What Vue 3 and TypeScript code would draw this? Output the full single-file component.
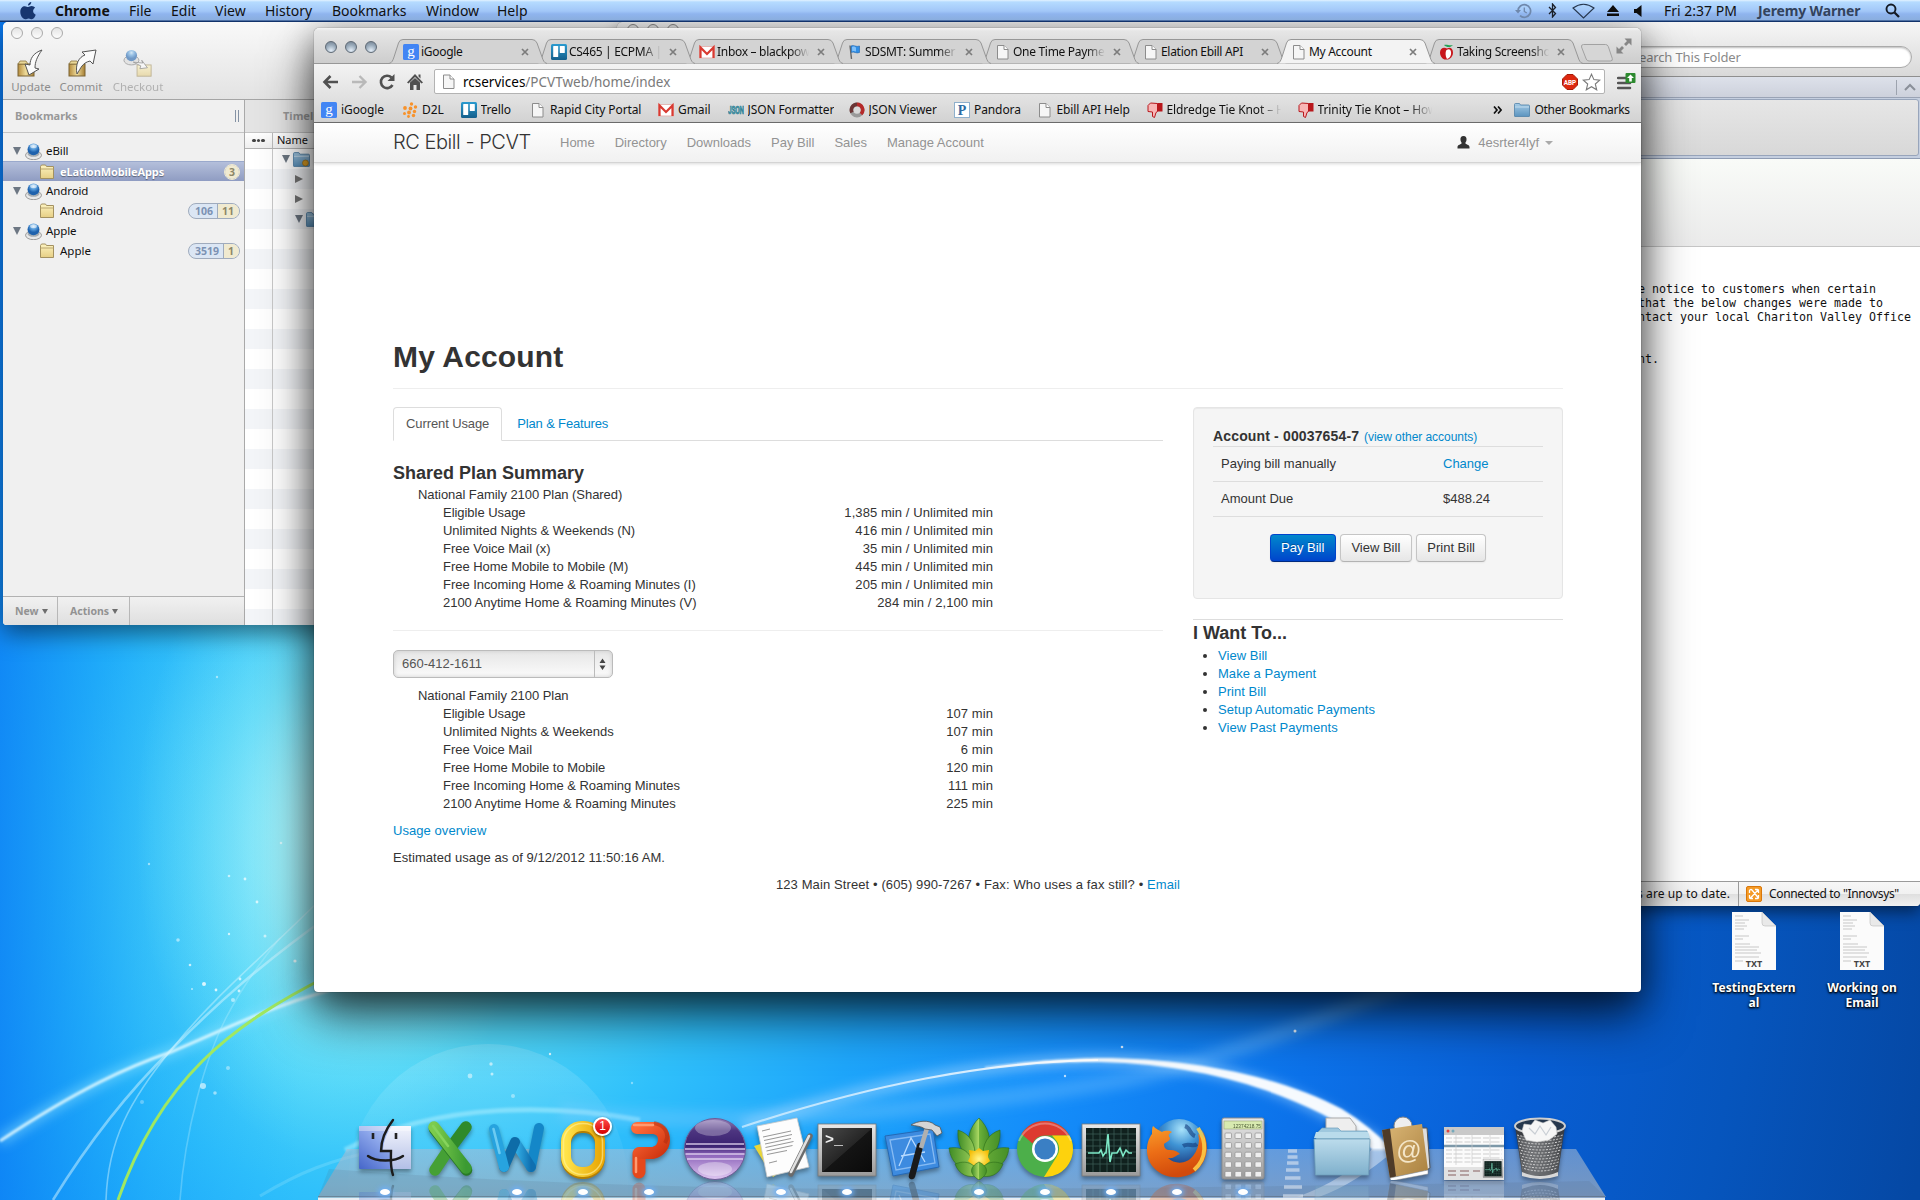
<script setup lang="ts">
interface Tab { title: string; icon: string; active?: boolean; fade?: boolean }
interface Mark { title: string; icon: string; width: number; fade?: boolean }
interface Usage { label: string; value: string }
interface DockItem { icon: string; running: boolean; badge?: string }

const menus = [
  { label: 'Chrome', w: 74, bold: true },
  { label: 'File', w: 42 },
  { label: 'Edit', w: 44 },
  { label: 'View', w: 50 },
  { label: 'History', w: 67 },
  { label: 'Bookmarks', w: 94 },
  { label: 'Window', w: 71 },
  { label: 'Help', w: 50 },
]

const tabs: Tab[] = [
  { title: 'iGoogle', icon: 'google' },
  { title: 'CS465 | ECPMA | T', icon: 'trello', fade: true },
  { title: 'Inbox – blackpowder', icon: 'gmail', fade: true },
  { title: 'SDSMT: Summer E', icon: 'flag', fade: true },
  { title: 'One Time Payment', icon: 'page', fade: true },
  { title: 'Elation Ebill API', icon: 'page' },
  { title: 'My Account', icon: 'page', active: true },
  { title: 'Taking Screenshots', icon: 'apple-red', fade: true },
]

const marks: Mark[] = [
  { title: 'iGoogle', icon: 'google', width: 81 },
  { title: 'D2L', icon: 'd2l', width: 58.5 },
  { title: 'Trello', icon: 'trello', width: 69.5 },
  { title: 'Rapid City Portal', icon: 'page', width: 128 },
  { title: 'Gmail', icon: 'gmail', width: 69.5 },
  { title: 'JSON Formatter', icon: 'json', width: 121 },
  { title: 'JSON Viewer', icon: 'ring', width: 105.5 },
  { title: 'Pandora', icon: 'pandora', width: 82.5 },
  { title: 'Ebill API Help', icon: 'page', width: 110 },
  { title: 'Eldredge Tie Knot – H', icon: 'thumb', width: 151, fade: true },
  { title: 'Trinity Tie Knot – How', icon: 'thumb', width: 140, fade: true },
]

const navLinks = ['Home', 'Directory', 'Downloads', 'Pay Bill', 'Sales', 'Manage Account']

const shared: Usage[] = [
  { label: 'Eligible Usage', value: '1,385 min / Unlimited min' },
  { label: 'Unlimited Nights & Weekends (N)', value: '416 min / Unlimited min' },
  { label: 'Free Voice Mail (x)', value: '35 min / Unlimited min' },
  { label: 'Free Home Mobile to Mobile (M)', value: '445 min / Unlimited min' },
  { label: 'Free Incoming Home & Roaming Minutes (I)', value: '205 min / Unlimited min' },
  { label: '2100 Anytime Home & Roaming Minutes (V)', value: '284 min / 2,100 min' },
]
const line: Usage[] = [
  { label: 'Eligible Usage', value: '107 min' },
  { label: 'Unlimited Nights & Weekends', value: '107 min' },
  { label: 'Free Voice Mail', value: '6 min' },
  { label: 'Free Home Mobile to Mobile', value: '120 min' },
  { label: 'Free Incoming Home & Roaming Minutes', value: '111 min' },
  { label: '2100 Anytime Home & Roaming Minutes', value: '225 min' },
]
const wants = ['View Bill', 'Make a Payment', 'Print Bill', 'Setup Automatic Payments', 'View Past Payments']

const repos = [
  { name: 'eBill', child: 'eLationMobileApps', selected: true, counts: ['3'] },
  { name: 'Android', child: 'Android', selected: false, counts: ['106', '11'] },
  { name: 'Apple', child: 'Apple', selected: false, counts: ['3519', '1'] },
]
const treeRows = Array.from({ length: 24 }, (_, i) => i)

const dockLeft: DockItem[] = [
  { icon: 'finder', running: true },
  { icon: 'excel', running: false },
  { icon: 'word', running: true },
  { icon: 'outlook', running: true, badge: '1' },
  { icon: 'powerpoint', running: true },
  { icon: 'eclipse', running: false },
  { icon: 'textedit', running: true },
  { icon: 'terminal', running: true },
  { icon: 'xcode', running: false },
  { icon: 'leaf', running: true },
  { icon: 'chrome', running: true },
  { icon: 'activity', running: true },
  { icon: 'firefox', running: true },
  { icon: 'calculator', running: true },
]
const dockRight: DockItem[] = [
  { icon: 'documents', running: false },
  { icon: 'contacts', running: false },
  { icon: 'minimized', running: false },
  { icon: 'trash', running: false },
]

const dots = [
  [217, 677, 1.2, 0.5], [281, 843, 1.3, 0.6], [229, 876, 1.3, 0.6], [245, 879, 1.4, 0.7], [257, 902, 1.4, 0.7],
  [178, 940, 1.8, 0.5], [229, 934, 1.2, 0.7], [265, 936, 1.5, 0.6], [190, 965, 1.3, 0.7], [240, 979, 1.4, 0.7],
  [204, 984, 2, 0.8], [216, 990, 1.4, 0.8], [192, 989, 1, 0.6], [239, 991, 1.4, 0.7], [295, 961, 1.6, 0.8],
  [233, 1000, 2, 0.5], [228, 1068, 2, 0.4], [203, 1086, 3, 0.6], [215, 1093, 1.8, 0.5], [142, 1102, 2, 0.3],
  [470, 1076, 2.4, 0.5], [491, 1064, 1.7, 0.6], [550, 1054, 1.2, 0.8], [513, 1096, 2, 0.4], [492, 1074, 1.5, 0.6],
  [632, 1083, 1.2, 0.4], [1122, 1047, 1.3, 0.8], [1295, 1031, 1.5, 0.9], [1065, 1076, 1.2, 0.7], [149, 864, 1.2, 0.5],
]
const calcKeys = Array.from({ length: 20 }, (_, i) => ({ x: 14 + (i % 4) * 10, y: 17 + Math.floor(i / 4) * 9.6 }))
const meshRows = [0, 1, 2, 3, 4, 5, 6, 7, 8, 9, 10, 11]
</script>

<template>
  <div class="desktop">
    <svg class="wallpaper" width="1920" height="1200" viewBox="0 0 1920 1200">
      <defs>
        <radialGradient id="sky" gradientUnits="userSpaceOnUse" cx="390" cy="860" r="1560">
          <stop offset="0" stop-color="#8cecfa" /><stop offset=".07" stop-color="#74e4f9" />
          <stop offset=".13" stop-color="#50d6f8" /><stop offset=".22" stop-color="#2fc0fb" />
          <stop offset=".32" stop-color="#1ea6fb" /><stop offset=".45" stop-color="#148dfa" />
          <stop offset=".6" stop-color="#0c72ea" /><stop offset=".74" stop-color="#085ed4" />
          <stop offset=".87" stop-color="#0655bd" /><stop offset="1" stop-color="#0548a4" />
        </radialGradient>
        <linearGradient id="skyLeft" x1="0" x2="1" y1="0" y2="0">
          <stop offset="0" stop-color="#0a7cf4" stop-opacity=".75" /><stop offset=".5" stop-color="#0c98f8" stop-opacity=".28" />
          <stop offset="1" stop-color="#18a8ff" stop-opacity="0" />
        </linearGradient>
        <radialGradient id="flare"><stop offset="0" stop-color="#d8fbf6" stop-opacity=".7" /><stop offset=".5" stop-color="#b8f8f8" stop-opacity=".3" /><stop offset="1" stop-color="#9ff" stop-opacity="0" /></radialGradient>
        <linearGradient id="bubble" x1="0" y1="0" x2="0" y2="1"><stop offset="0" stop-color="#fff" stop-opacity=".14" /><stop offset=".6" stop-color="#fff" stop-opacity="0" /></linearGradient>
        <linearGradient id="arc" x1="742" x2="1184" gradientUnits="userSpaceOnUse"><stop offset="0" stop-color="#fff" stop-opacity=".55" /><stop offset="1" stop-color="#fff" /></linearGradient>
        <filter id="soft1"><feGaussianBlur stdDeviation="1.2" /></filter>
        <filter id="soft5" x="-20%" y="-50%" width="140%" height="200%"><feGaussianBlur stdDeviation="6" /></filter>
      </defs>
      <rect width="1920" height="1200" fill="url(#sky)" />
      <rect width="300" height="1200" fill="url(#skyLeft)" />
      <ellipse cx="335" cy="830" rx="200" ry="330" fill="url(#flare)" />
      <circle cx="488" cy="1184" r="140" fill="url(#bubble)" />
      <g fill="none">
        <path d="M345 1150C440 1100 560 1105 640 1120" stroke="#bff3ff" stroke-opacity=".45" stroke-width="5" filter="url(#soft1)" />
        <path d="M560 1112C740 1130 940 1110 1124 1080C1240 1055 1340 1010 1440 970" stroke="#8fd0ff" stroke-opacity=".3" stroke-width="16" filter="url(#soft5)" />
        <path d="M0 1141C80 1088 130 1066 171 1052C220 1032 260 1010 330 990" stroke="#8fe4ff" stroke-opacity=".6" stroke-width="9" filter="url(#soft5)" />
        <path d="M0 1141C80 1088 130 1066 171 1052C220 1032 260 1010 330 990" stroke="#e4faff" stroke-opacity=".85" stroke-width="3" filter="url(#soft1)" />
        <path d="M53 1200C90 1140 130 1090 171 1050C215 1005 260 965 330 915" stroke="#d4f6ff" stroke-opacity=".5" stroke-width="2.600" />
        <path d="M106 1200C108 1140 130 1100 171 1050C215 995 260 960 330 890" stroke="#d4f6ff" stroke-opacity=".45" stroke-width="1.600" />
        <path d="M180 1200C185 1130 205 1060 225 1020C240 990 262 960 280 938" stroke="#c4f3ff" stroke-opacity=".3" stroke-width="1.600" />
        <path d="M118 1200C160 1080 230 1025 330 975" stroke="#a0e860" stroke-width="3" />
        <path d="M260 1196C300 1172 330 1160 380 1150" stroke="#c4f3ff" stroke-opacity=".2" stroke-width="3" />
        <path d="M742 1127C870 1085 985 1062 1098 1060C1215 1060 1290 1085 1384 1146" stroke="#9fd6ff" stroke-opacity=".6" stroke-width="12" filter="url(#soft5)" />
        <path d="M742 1127C870 1085 985 1062 1098 1060" stroke="url(#arc)" stroke-width="2.200" />
      </g>
      <path d="M985 1067C1040 1060 1070 1058.500 1100 1058C1190 1058 1280 1076 1342 1109Q1370 1126 1393 1150H1372Q1346 1126 1322 1114C1265 1085 1190 1064 1100 1062C1060 1062 1040 1063 985 1068Z" fill="#fff" fill-opacity=".95" filter="url(#soft1)" />
      <circle v-for="(d, i) in dots" :key="i" :cx="d[0]" :cy="d[1]" :r="d[2]" fill="#fff" :fill-opacity="d[3]" />
    </svg>

    <!-- Shared gradients -->
    <svg class="sprite" width="0" height="0">
      <defs>
        <linearGradient id="gTrello" x2="0" y2="1"><stop offset="0" stop-color="#2a9bd0" /><stop offset="1" stop-color="#155f8b" /></linearGradient>
        <linearGradient id="gFolder" x2="0" y2="1"><stop offset="0" stop-color="#a5cbe6" /><stop offset="1" stop-color="#5b94bf" /></linearGradient>
        <linearGradient id="gYellow" x2="0" y2="1"><stop offset="0" stop-color="#fdf3c0" /><stop offset="1" stop-color="#e6cf85" /></linearGradient>
        <linearGradient id="gGold" x2="1" y2="0"><stop offset="0" stop-color="#b48b3d" /><stop offset=".5" stop-color="#efdc9b" /><stop offset="1" stop-color="#a57d32" /></linearGradient>
        <radialGradient id="gOrb" cx=".5" cy=".25"><stop offset="0" stop-color="#c3e2f8" /><stop offset=".5" stop-color="#5b9fdc" /><stop offset="1" stop-color="#1f62ad" /></radialGradient>
        <linearGradient id="gFinder" x1="0" y1="1" x2="1" y2="0"><stop offset="0" stop-color="#4566c9" /><stop offset=".5" stop-color="#8ba5ea" /><stop offset="1" stop-color="#dfe7fb" /></linearGradient>
        <linearGradient id="gFinder2" x2="0" y2="1"><stop offset="0" stop-color="#f3f5fd" /><stop offset="1" stop-color="#b3bfe6" /></linearGradient>
        <linearGradient id="gGreen" x2="1" y2="0"><stop offset="0" stop-color="#7dcc4c" /><stop offset="1" stop-color="#3b9a32" /></linearGradient>
        <linearGradient id="gBlue" x2="1" y2="0"><stop offset="0" stop-color="#36b4ea" /><stop offset="1" stop-color="#0f6fb0" /></linearGradient>
        <linearGradient id="gAmber" x2="1" y2="0"><stop offset="0" stop-color="#ffe34a" /><stop offset="1" stop-color="#eaa908" /></linearGradient>
        <linearGradient id="gRed" x2="1" y2="1"><stop offset="0" stop-color="#ff6a38" /><stop offset="1" stop-color="#cf3510" /></linearGradient>
        <linearGradient id="gEclipse" x2="0" y2="1"><stop offset="0" stop-color="#9a86bd" /><stop offset=".2" stop-color="#4d3580" /><stop offset=".45" stop-color="#3a2270" /><stop offset=".6" stop-color="#8e66bb" /><stop offset="1" stop-color="#e0c8f2" /></linearGradient>
        <linearGradient id="gMetal" x2="0" y2="1"><stop offset="0" stop-color="#e8e8e8" /><stop offset="1" stop-color="#9a9a9a" /></linearGradient>
        <linearGradient id="gDark" x2="1" y2="1"><stop offset="0" stop-color="#4a4a4a" /><stop offset=".5" stop-color="#262626" /><stop offset=".51" stop-color="#141414" /><stop offset="1" stop-color="#0a0a0a" /></linearGradient>
        <linearGradient id="gLeaf" x2="1" y2="0"><stop offset="0" stop-color="#3f8c26" /><stop offset=".48" stop-color="#a9d862" /><stop offset=".52" stop-color="#6cb03a" /><stop offset="1" stop-color="#458f28" /></linearGradient>
        <radialGradient id="gSun"><stop offset="0" stop-color="#fff68a" /><stop offset="1" stop-color="#f5bd05" /></radialGradient>
        <radialGradient id="gGlobe" cx=".55" cy=".2" r=".8"><stop offset="0" stop-color="#a9e3fb" /><stop offset=".4" stop-color="#3f93d4" /><stop offset="1" stop-color="#132a70" /></radialGradient>
        <linearGradient id="gFox" x2=".3" y2="1"><stop offset="0" stop-color="#f9a02c" /><stop offset=".5" stop-color="#ec6e16" /><stop offset="1" stop-color="#d14a0b" /></linearGradient>
        <linearGradient id="gDocs" x2="0" y2="1"><stop offset="0" stop-color="#bcdcec" /><stop offset="1" stop-color="#7fb0cc" /></linearGradient>
        <linearGradient id="gBook" x2="1" y2="1"><stop offset="0" stop-color="#dcb878" /><stop offset="1" stop-color="#a9803e" /></linearGradient>
        <linearGradient id="gMesh" x2="1" y2="0"><stop offset="0" stop-color="#777" /><stop offset=".3" stop-color="#d8d8d8" /><stop offset=".7" stop-color="#aaa" /><stop offset="1" stop-color="#555" /></linearGradient>
      </defs>
    </svg>

    <!-- Icon symbols -->
    <svg class="symbols">
      <symbol id="i-google" viewBox="0 0 16 16"><rect width="16" height="16" rx="1.5" fill="#4285f4" /><text x="8" y="11.8" text-anchor="middle" font-family="Liberation Serif, serif" font-size="15" fill="#fff">g</text></symbol>
      <symbol id="i-trello" viewBox="0 0 16 16"><rect width="16" height="16" rx="1.5" fill="url(#gTrello)" /><rect x="2.2" y="2" width="5" height="11" rx=".6" fill="#fff" /><rect x="8.8" y="2" width="5" height="7" rx=".6" fill="#fff" /></symbol>
      <symbol id="i-gmail" viewBox="0 0 16 16"><rect x=".5" y="2.5" width="15" height="11.5" fill="#fff" stroke="#e4b7b4" /><path d="M1.5 14V3.5L8 10l6.500-6.500V14" fill="none" stroke="#d93a31" stroke-width="2.200" /></symbol>
      <symbol id="i-flag" viewBox="0 0 16 16"><path d="M3 1.500l1.500 13.500" stroke="#666" stroke-width="1.400" /><path d="M4 2c3-1.500 5 1.500 8.500 0v6.500c-3.500 1.500-5.500-1.500-8 0z" fill="#2f8ee6" stroke="#1a62ae" stroke-width=".6" /><path d="M5 3c2-1 3 0 4 .5v4c-1.500-.5-2.500-.8-3.800 0z" fill="#7fc0fa" /></symbol>
      <symbol id="i-page" viewBox="0 0 16 16"><path d="M2.500 1.500h6.500l4 4v9.500h-10.500z" fill="#f6f6f6" stroke="#8c8c8c" /><path d="M9 1.500v4h4" fill="#fff" stroke="#8c8c8c" /></symbol>
      <symbol id="i-apple-red" viewBox="0 0 16 16"><path d="M8 4.500C5 2.500 1 4 1 8.500S4.500 16 7 15.500c4 .5 7-3 7-7S11 2.500 8 4.500z" fill="#c8161b" /><path d="M7.500 6c-1.500 2-1 7 .5 9 3-1 4.500-4 4-7S10 4.500 7.500 6z" fill="#fff" /><path d="M5 1c3-1 5 1 9 0-2 2.500-6 3-9 0z" fill="#22a455" /></symbol>
      <symbol id="i-d2l" viewBox="0 0 16 16"><g fill="#f7922b"><circle cx="9.500" cy="2" r="1.700" /><circle cx="13.500" cy="5" r="1.700" /><circle cx="8.500" cy="6.500" r="1.900" /><circle cx="3" cy="6" r="1.900" /><circle cx="12.500" cy="9.500" r="1.700" /><circle cx="7" cy="10.500" r="1.900" /><circle cx="2.500" cy="11.500" r="1.500" /><circle cx="11.500" cy="13.500" r="1.700" /><circle cx="6.500" cy="14.500" r="1.400" /></g></symbol>
      <symbol id="i-json" viewBox="0 0 16 16"><text x="8" y="12" text-anchor="middle" font-family="Roboto, sans-serif" font-weight="700" font-size="11.500" textLength="16" lengthAdjust="spacingAndGlyphs" fill="#4aa3b5" stroke="#1c6f86" stroke-width=".6">JSON</text></symbol>
      <symbol id="i-ring" viewBox="0 0 16 16"><circle cx="8" cy="8" r="5.600" fill="none" stroke="#9a9a9a" stroke-width="3.600" /><path d="M8 2.400A5.600 5.600 0 0 1 12 12" fill="none" stroke="#b52a2a" stroke-width="3.600" /><path d="M3 10.500A5.600 5.600 0 0 1 8 2.400" fill="none" stroke="#6b3636" stroke-width="3.600" /></symbol>
      <symbol id="i-pandora" viewBox="0 0 16 16"><rect x=".5" y=".5" width="15" height="15" fill="#fff" stroke="#8fb0cc" /><text x="8" y="13" text-anchor="middle" font-family="Liberation Serif, serif" font-weight="700" font-size="14" fill="#2c6aa2">P</text></symbol>
      <symbol id="i-thumb" viewBox="0 0 16 16"><path d="M10.500 1.500L3.500 1 1 3.500v6l4.500.5v4.500l2 1 1.500-5 1.500-1z" fill="#f8b6b6" stroke="#b8171c" /><rect x="10.500" y="1" width="5" height="8.500" fill="#b8171c" /></symbol>
      <symbol id="i-folder" viewBox="0 0 16 16"><path d="M.5 2.500q0-1 1-1h4l1 1.500h8q1 0 1 1v10q0 .5-.5.500H1q-.5 0-.5-.5z" fill="url(#gFolder)" stroke="#4f81a8" stroke-width=".8" /><path d="M1 5h14" stroke="#cfe4f3" stroke-width=".8" /></symbol>
      <symbol id="i-yfolder" viewBox="0 0 16 16"><path d="M1.500 2.500l1-1.500h4l1 1.500h7v12h-13z" fill="url(#gYellow)" stroke="#a39160" /><path d="M1.500 5h13" stroke="#b9a671" /></symbol>
      <symbol id="i-orb" viewBox="0 0 16 16"><ellipse cx="8" cy="11.500" rx="7.500" ry="4.200" fill="#e8e8e8" stroke="#8d8d8d" stroke-width=".8" /><ellipse cx="8" cy="10" rx="5.600" ry="3" fill="#a5acb2" /><circle cx="8" cy="6" r="5.600" fill="url(#gOrb)" /><ellipse cx="8" cy="3" rx="3.200" ry="1.800" fill="#fff" fill-opacity=".55" /></symbol>

      <symbol id="d-finder" viewBox="0 0 64 64"><rect x="6" y="10" width="52" height="43" rx="1" fill="url(#gFinder)" /><path d="M39 10h18q1 0 1 1v42H40c-2-6-2-12-2-18h-8c0-9 4-18 9-25z" fill="url(#gFinder2)" /><rect x="6" y="10" width="52" height="5" fill="#fff" fill-opacity=".35" /><path d="M20 17v6M43 17v6" stroke="#222" stroke-width="2.600" /><path d="M40 4c-7 9-12 20-12 31h10c0 8-1 16 2 24" fill="none" stroke="#1c1c1c" stroke-width="2.400" stroke-linecap="round" /><path d="M15 40c8 6 27 6 35 0" fill="none" stroke="#1c1c1c" stroke-width="2.400" stroke-linecap="round" /></symbol>
      <symbol id="d-excel" viewBox="0 0 64 64"><g stroke-linecap="round" stroke-width="11.500"><path d="M47 11L30 34" stroke="#2f8a2a" /><path d="M30 33L16 54" stroke="#45a035" /><path d="M15 12L47 53" stroke="#287a26" transform="translate(.5 1)" /><path d="M15 11L47 52" stroke="url(#gGreen)" /><path d="M14 10L29 30" stroke="#86d45c" stroke-width="2.500" /></g></symbol>
      <symbol id="d-word" viewBox="0 0 64 64"><g fill="none" stroke-linecap="round" stroke-linejoin="round" stroke-width="10"><path d="M46 51L54 12" stroke="#1487c8" /><path d="M30 26L46 51" stroke="url(#gBlue)" /><path d="M19 51L30 26" stroke="#0e6ca8" /><path d="M9 13L19 51" stroke="#27a3df" /><path d="M8.500 13l6 24" stroke="#6ccbf2" stroke-width="2.600" /></g></symbol>
      <symbol id="d-outlook" viewBox="0 0 64 64"><rect x="15" y="11" width="34" height="46" rx="16" fill="none" stroke="#b37f05" stroke-width="10" transform="translate(0 1)" /><rect x="15" y="10" width="34" height="46" rx="16" fill="none" stroke="url(#gAmber)" stroke-width="10" /><rect x="12.500" y="7.500" width="39" height="51" rx="19" fill="none" stroke="#fff3a0" stroke-opacity=".6" stroke-width="1.500" /></symbol>
      <symbol id="d-powerpoint" viewBox="0 0 64 64"><path d="M22 38v18" fill="none" stroke="#e5481c" stroke-width="13" stroke-linecap="round" /><path d="M20 12h17c14 2 13 22-1 25H22" fill="none" stroke="url(#gRed)" stroke-width="12" stroke-linecap="round" stroke-linejoin="round" /><path d="M37 7c12 2 16 12 11 20" fill="none" stroke="#a3260b" stroke-opacity=".4" stroke-width="4" /><path d="M17 9h19M19 42v14" stroke="#ff9a70" stroke-width="2.500" stroke-linecap="round" /></symbol>
      <symbol id="d-eclipse" viewBox="0 0 64 64"><circle cx="32" cy="33" r="30.500" fill="url(#gEclipse)" stroke="#6e5a96" /><path d="M3 28h58M2 33h60M2.500 38h59M4 43h56" stroke="#e8dcf5" stroke-opacity=".85" stroke-width="1.500" /><ellipse cx="30" cy="12" rx="18" ry="8" fill="#fff" fill-opacity=".28" /><ellipse cx="32" cy="53" rx="17" ry="7" fill="#fff" fill-opacity=".35" /></symbol>
      <symbol id="d-textedit" viewBox="0 0 64 64"><path d="M5 30l10-3 15 30-6 4z" fill="#e8d539" /><path d="M8 10l40-8 12 49-42 10z" fill="#fdfdfd" stroke="#c8c8c8" stroke-width=".8" /><g stroke="#8b8b8b" stroke-width=".9"><path d="M13 15l8-2M14 21l28-6M15 24.500l28-6M16 28l26-5.500M16.500 31.500l28-6M17.500 35l26-5.500M18 38.500l20-4M20 47l8-2" /></g><path d="M61 20L42 58" stroke="#6b6b6b" stroke-width="5.500" stroke-linecap="round" /><path d="M60 20L42 56" stroke="#e2e2e2" stroke-width="2.600" stroke-linecap="round" /></symbol>
      <symbol id="d-terminal" viewBox="0 0 64 64"><rect x="3" y="8" width="58" height="52" fill="url(#gMetal)" stroke="#777" stroke-width=".8" /><rect x="7" y="12" width="50" height="44" fill="url(#gDark)" /><text x="10" y="28" font-family="Liberation Mono, monospace" font-weight="700" font-size="15" fill="#f1f1f1">&gt;_</text></symbol>
      <symbol id="d-xcode" viewBox="0 0 64 64"><path d="M4 20l48-7 6 38-46 9z" fill="#3d8be0" stroke="#2568b4" /><g fill="none" stroke="#b7daff" stroke-width="1.300"><path d="M9 24l40-6 5 29-39 7z" stroke-opacity=".6" /><path d="M18 50l12-28 14 24M20 40l24-4" /></g><path d="M39 30L31 60" stroke="#1a1a1a" stroke-width="6.500" stroke-linecap="round" /><path d="M46 12l-6 20" stroke="#b0b0b0" stroke-width="4.500" /><path d="M30 9c6-4 18-6 24 0l5 2 2 6-5 3-5-6-7-1c-4-3-9-3-14-4z" fill="#d5d5d5" stroke="#555" stroke-width=".8" /></symbol>
      <symbol id="d-leaf" viewBox="0 0 64 64"><g fill="url(#gLeaf)" stroke="#2c6b18" stroke-width=".6"><path d="M32 2c9 9 13 20 9 34H23C19 22 23 11 32 2z" /><path d="M11 14c12 4 18 14 17 28-12 0-18-14-17-28zM53 14c-12 4-18 14-17 28 12 0 18-14 17-28z" /><path d="M2 32c14-2 22 4 26 20C16 56 4 48 2 32zM62 32c-14-2-22 4-26 20 12 4 24-4 26-20z" /></g><path d="M32 32l4 3 6-1-1 7 2 4-11 9-11-9 2-4-1-7 6 1z" fill="url(#gSun)" /><g fill="url(#gLeaf)" stroke="#2c6b18" stroke-width=".6"><path d="M8 48c10-4 20-2 24 11-10 4-20 0-24-11zM56 48c-10-4-20-2-24 11 10 4 20 0 24-11z" /><path d="M32 46c10 5 10 12 0 18-10-6-10-13 0-18z" /></g></symbol>
      <symbol id="d-chrome" viewBox="0 0 64 64"><circle cx="32" cy="33" r="28" fill="#4caf4a" /><path d="M32 5a28 28 0 0 1 24.500 14.500H32a14 14 0 0 0-12.500 8L8.500 18A28 28 0 0 1 32 5z" fill="#dd3b30" /><path d="M56.500 19.500A28 28 0 0 1 31 61l12.500-20A14 14 0 0 0 42 23l-3-3.500z" fill="#fdd20d" /><circle cx="32" cy="33" r="13" fill="#fff" /><circle cx="32" cy="33" r="10.500" fill="#3a7fc4" /><path d="M6 25a28 28 0 0 1 52 0" fill="none" stroke="#fff" stroke-opacity=".3" stroke-width="2" /></symbol>
      <symbol id="d-activity" viewBox="0 0 64 64"><rect x="3" y="8" width="58" height="52" fill="url(#gMetal)" stroke="#777" stroke-width=".8" /><rect x="7" y="12" width="50" height="44" fill="#10211e" /><path d="M7 18h50M7 24h50M7 30h50M7 36h50M7 42h50M7 48h50M14 12v44M21 12v44M28 12v44M35 12v44M42 12v44M49 12v44" stroke="#3b5c54" stroke-width=".8" /><path d="M9 37h11l2-3 2 6 2-3h1l2-19 2 28 2-9h5l3-5 3 8 3-6 3 3h3" fill="none" stroke="#7ce8c6" stroke-width="1.600" /></symbol>
      <symbol id="d-firefox" viewBox="0 0 64 64"><circle cx="34" cy="29" r="26" fill="url(#gGlobe)" /><path d="M40 10c6 2 4 8 10 10M38 30c6-4 10 2 14-2" stroke="#123b7c" stroke-width="4" fill="none" stroke-opacity=".6" /><path d="M57 14c8 14 6 30-5 40C40 64 20 64 9 52-2 40 2 24 7 18c0-4 0-6 1-8 3 3 6 4 9 6 4-2 8-1 10 0-4 2-4 4-2 6 0 3-4 4-6 6 0 4 2 6 6 6 5 0 8 2 10 4-4 1-6 5-12 4 6 6 18 7 25-2 6-8 7-16 5-22 3 2 5 4 6 6 0-4-1-7-2-10z" fill="url(#gFox)" /><path d="M53 12c8 12 10 30-4 42" fill="none" stroke="#ffd24a" stroke-width="4" stroke-opacity=".85" /></symbol>
      <symbol id="d-calculator" viewBox="0 0 64 64"><rect x="11" y="2" width="42" height="61" rx="2" fill="url(#gMetal)" stroke="#8d8d8d" /><rect x="13" y="5" width="38" height="8" fill="#d8eab0" stroke="#9aa67b" stroke-width=".6" /><text x="50" y="11.500" text-anchor="end" font-family="Liberation Sans, sans-serif" font-size="6" textLength="28" lengthAdjust="spacingAndGlyphs" fill="#4b5a36">12374218.75</text><g fill="#efefef" stroke="#909090" stroke-width=".7"><rect v-for="(k, i) in calcKeys" :key="i" :x="k.x" :y="k.y" width="6.500" height="5.500" rx="1" /></g></symbol>
      <symbol id="d-documents" viewBox="0 0 64 64"><path d="M16 2h24l6 8v10H16z" fill="#eee" stroke="#aaa" /><path d="M8 16l4-4h16l3 3h26l2 8H6z" fill="#9fc8de" stroke="#6d9ebb" stroke-width=".7" /><path d="M4 22l2-6h52l2 6z" fill="#b9dbeb" /><path d="M4 23h56l-1.500 36h-53z" fill="url(#gDocs)" stroke="#6f9fbb" stroke-width=".8" /></symbol>
      <symbol id="d-contacts" viewBox="0 0 64 64"><circle cx="27" cy="10" r="9" fill="#eee" stroke="#888" /><path d="M44 12h7l3 40-7 4z" fill="#ddd" stroke="#555" /><path d="M6 14l40-6 6 46-38 8z" fill="url(#gBook)" /><path d="M6 14l8-1.500 6 48-6 1.500z" fill="#4e3b28" /><path d="M14 62l38-8 0 4-37 7z" fill="#fff" stroke="#888" stroke-width=".5" /><text x="33" y="43" text-anchor="middle" font-family="Liberation Sans, sans-serif" font-size="25" fill="#f4e6c8">@</text></symbol>
      <symbol id="d-minimized" viewBox="0 0 64 64"><rect x="2" y="11" width="60" height="56" fill="#fbfbfb" /><rect x="2" y="11" width="60" height="8" fill="#c9c9c9" /><circle cx="6" cy="15" r="1.500" fill="#d44" /><circle cx="11" cy="15" r="1.500" fill="#7ab" /><path d="M4 22h56M4 26h56M4 34h56M4 38h56M4 42h56M4 46h56" stroke="#bbb" stroke-width=".7" stroke-dasharray="6 1.500 9 2" /><path d="M2 30h60" stroke="#7d98a8" stroke-width="2.500" /><path d="M14 19v30M30 19v30M48 19v30" stroke="#ccc" stroke-width=".7" /><rect x="2" y="51" width="60" height="13" fill="#e2e2e2" /><path d="M6 55h8M6 59h8M18 55h9M18 59h9M31 55h7" stroke="#a58a8a" stroke-width="1.300" /></symbol>
      <symbol id="d-trash" viewBox="0 0 64 64"><path d="M7 10l7 47c1 5 35 5 36 0l7-47z" fill="#3a3d42" /><path d="M9 20l5 36c1 5 35 5 36 0l5-36z" fill="url(#gMesh)" fill-opacity=".35" /><g fill="none" stroke="#d5d5d5" stroke-width="1" stroke-dasharray="2 1.400"><path v-for="r in meshRows" :key="r" :d="`M${9 + r * 0.5} ${19 + r * 3}Q32 ${25 + r * 3} ${55 - r * 0.5} ${19 + r * 3}`" :stroke-dashoffset="(r % 2) * 1.7" /></g><ellipse cx="32" cy="10" rx="25" ry="7.500" fill="#26384e" stroke="#cfcfcf" stroke-width="2" /><path d="M14 15l2-7 7 1 4-5 8 3 7-3 6 7 1 7-8 6-12 2-11-2z" fill="#f6f6f6" stroke="#ccc" stroke-width=".6" /><path d="M21 12l6 6 5-8 6 9 5-8" fill="none" stroke="#c9ced4" stroke-width="1.200" /><path d="M14 56q18 8 36 0v4q-18 6-36 0z" fill="#d8d8d8" /></symbol>
    </svg>

    <!-- Version-control client -->
    <section class="window svn">
      <header class="svn-bar">
        <div class="idle-lights"><i /><i /><i /></div>
        <div class="svn-tools">
          <div class="tool">
            <svg width="34" height="30" viewBox="0 0 34 30"><rect x="4" y="15" width="16" height="12" fill="url(#gGold)" stroke="#7a6333" /><path d="M4 15l2-3h6l2 3z" fill="#e9d798" stroke="#8a7340" stroke-width=".8" /><path d="M28 1C19 4 16 10 16 16l-5-1 4 11 10-6-4-1c0-6 2-11 7-18z" fill="#fbfbfb" stroke="#555" /></svg>
            <span>Update</span>
          </div>
          <div class="tool">
            <svg width="34" height="30" viewBox="0 0 34 30"><rect x="5" y="15" width="16" height="12" fill="url(#gGold)" stroke="#7a6333" /><path d="M5 15l2-3h6l2 3z" fill="#e9d798" stroke="#8a7340" stroke-width=".8" /><path d="M13 25C11 15 15 8 21 6l-3-3 14-2-3 14-3-3c-8 2-9 7-13 13z" fill="#fbfbfb" stroke="#555" /></svg>
            <span>Commit</span>
          </div>
          <div class="tool faded">
            <svg width="34" height="32" viewBox="0 0 34 32"><ellipse cx="10" cy="12" rx="8" ry="5" fill="#ddd" stroke="#777" /><circle cx="10" cy="7" r="6" fill="url(#gOrb)" /><rect x="16" y="17" width="15" height="12" fill="url(#gYellow)" stroke="#a39160" /><path d="M12 14l10 1-1-3 6 8-8 1 1-3z" fill="#fff" stroke="#555" stroke-width=".8" /></svg>
            <span>Checkout</span>
          </div>
        </div>
      </header>
      <div class="svn-body">
        <aside class="side">
          <div class="side-head"><span>Bookmarks</span><i class="grip" /></div>
          <ul class="repos">
            <template v-for="r in repos" :key="r.name">
              <li class="repo"><i class="tri down" /><svg width="17" height="17"><use href="#i-orb" /></svg><span>{{ r.name }}</span></li>
              <li class="repo child" :class="{ selected: r.selected }">
                <svg width="16" height="16"><use href="#i-yfolder" /></svg><span>{{ r.child }}</span>
                <b class="pill"><em v-for="c in r.counts" :key="c">{{ c }}</em></b>
              </li>
            </template>
          </ul>
          <div class="side-foot"><span class="new">New<i /></span><span class="actions">Actions<i /></span></div>
        </aside>
        <div class="tree">
          <div class="tree-top">Timeline</div>
          <div class="tree-head"><span class="dots"><i /><i /><i /></span><span>Name</span></div>
          <div class="tree-rows">
            <div v-for="n in treeRows" :key="n" class="tree-row">
              <span class="cell">
                <template v-if="n === 0"><i class="tri down" /><svg width="17" height="17"><use href="#i-folder" /><circle cx="12.500" cy="12" r="3" fill="#e0a024" stroke="#946710" stroke-width=".6" /></svg></template>
                <template v-else-if="n < 4"><i class="tri in" :class="n === 3 ? 'down' : 'right'" /><svg width="17" height="17"><use href="#i-folder" /></svg></template>
              </span>
            </div>
          </div>
        </div>
      </div>
    </section>

    <!-- Mail client -->
    <section class="window mail">
      <div class="mail-bar"><div class="idle-lights dark"><i /><i /><i /></div><div class="mail-search">Search This Folder</div></div>
      <div class="mail-cols"><i /><svg width="14" height="8" viewBox="0 0 14 8"><path d="M2 7l5-5 5 5" fill="none" stroke="#8a8f99" stroke-width="2" /></svg></div>
      <div class="mail-sel"><div /></div>
      <div class="mail-head" />
      <pre class="mail-text">e notice to customers when certain
that the below changes were made to
ntact your local Chariton Valley Office


nt.</pre>
      <div class="mail-status">
        <span class="uptodate">All folders are up to date.</span>
        <svg width="16" height="16" viewBox="0 0 16 16"><rect x=".5" y=".5" width="15" height="15" rx="1.500" fill="#f49a26" stroke="#d9770a" /><path d="M3.500 7V4.500a1.500 1.500 0 0 1 2.500-.5l6 7.500M9 3.500h2.500a1 1 0 0 1 1 1V7M3.500 9v2.500a1 1 0 0 0 1 1H7M12.500 3.500l-8.500 9M9 12.500h2.500a1 1 0 0 0 1-1V9" fill="none" stroke="#fff" stroke-width="1.300" /></svg>
        <span class="conn">Connected to "Innovsys"</span>
      </div>
    </section>

    <div class="files">
      <figure v-for="f in ['TestingExtern\nal', 'Working on\nEmail']" :key="f">
        <svg width="47" height="61" viewBox="0 0 47 61">
          <path d="M1 1h30l14 14v44H1z" fill="#fbfbfb" /><path d="M31 1l14 14H34q-3 0-3-3z" fill="#e9e9e9" stroke="#bbb" stroke-width=".6" />
          <path d="M4 5h8M4 9h14M4 12h10M4 15h12M4 18h9M4 25h14M4 28h8M4 33h15M4 36h24M4 39h22M4 42h26M4 46h24M4 50h8" stroke="#bbb" stroke-width=".8" />
          <text x="23" y="56" text-anchor="middle" font-family="Noto Sans, sans-serif" font-weight="700" font-size="9" fill="#444">TXT</text>
        </svg>
        <figcaption>{{ f }}</figcaption>
      </figure>
    </div>

    <!-- Browser -->
    <section class="window browser">
      <div class="tabstrip">
        <div class="lights"><i /><i /><i /></div>
        <div class="tabs">
          <div v-for="(t, i) in tabs" :key="i" class="tab" :class="{ active: t.active }" :style="{ zIndex: t.active ? 20 : 10 - i }">
            <svg class="tab-shape" width="158" height="25" viewBox="0 0 158 25"><path d="M0 24.500C3 24 4 21 5 18L9.500 4Q10.500.5 14 .5H143Q146.500.5 148 4L153 18C154 21 155 24 158 24.500" :fill="t.active ? '#f3f3f3' : '#d3d3d3'" stroke="#979797" /></svg>
            <svg class="fav" width="16" height="16"><use :href="'#i-' + t.icon" /></svg>
            <span class="tab-title" :class="{ fade: t.fade }">{{ t.title }}</span>
            <svg class="x" width="8" height="8" viewBox="0 0 8 8"><path d="M1 1l6 6M7 1L1 7" stroke="#7c7c7c" stroke-width="1.700" /></svg>
          </div>
        </div>
        <svg class="newtab" width="34" height="18" viewBox="0 0 34 18"><path d="M3.500.5h22q2 0 2.800 2l4 12q.7 2.500-2 2.500H9q-2 0-2.800-2L1.500 3Q1 .5 3.500.5z" fill="#d6d6d6" stroke="#a2a2a2" /></svg>
        <svg class="full" width="16" height="16" viewBox="0 0 16 16"><path d="M8.500.5h7v7L13 5 10 8 8 6l3-3zM7.500 15.500h-7v-7L3 11l3-3 2 2-3 3z" fill="#868686" /></svg>
      </div>
      <div class="toolbar">
        <svg width="18" height="16" viewBox="0 0 18 16"><path d="M16 8H3M8.500 2L2.500 8l6 6" fill="none" stroke="#505050" stroke-width="2.600" /></svg>
        <svg width="18" height="16" viewBox="0 0 18 16"><path d="M2 8h13M9.500 2l6 6-6 6" fill="none" stroke="#b9b9b9" stroke-width="2.400" /></svg>
        <svg width="18" height="18" viewBox="0 0 18 18"><path d="M14.500 12A6.200 6.200 0 1 1 13.500 4.500" fill="none" stroke="#505050" stroke-width="2.600" /><path d="M16.500 1v7h-7z" fill="#505050" /></svg>
        <svg width="18" height="18" viewBox="0 0 18 18"><path d="M9 1l8 8.500-1.500 1L9 4 2.500 10.500 1 9.500z" fill="#505050" /><path d="M4 9.500L9 5l5 4.500V17h-3.500v-5h-3v5H4zM12.500 1.500h2v4l-2-2z" fill="#505050" /></svg>
        <div class="omni">
          <svg width="16" height="17"><use href="#i-page" /></svg>
          <span class="url"><b>rcservices</b>/PCVTweb/home/index</span>
          <svg class="abp" width="16" height="16" viewBox="0 0 16 16"><path d="M5 .5h6L15.500 5v6L11 15.500H5L.5 11V5z" fill="#dd2810" stroke="#a61c0a" /><text x="8" y="10.600" text-anchor="middle" font-family="Roboto, sans-serif" font-weight="700" font-size="7" fill="#fff" textLength="12.500" lengthAdjust="spacingAndGlyphs">ABP</text></svg>
          <svg width="19" height="18" viewBox="0 0 19 18"><path d="M9.500 1.200l2.400 5.400 5.800.5-4.400 3.900 1.400 5.800-5.200-3.100-5.200 3.100L5.700 11 1.300 7.100l5.800-.5z" fill="#fff" stroke="#7a7a7a" stroke-width="1.100" /></svg>
        </div>
        <svg class="menu" width="19" height="18" viewBox="0 0 19 18"><path d="M1 5h12M1 10h12M1 15h12" stroke="#555" stroke-width="2.500" stroke-linecap="round" /><rect x="8.500" y="0" width="10" height="10" rx="1" fill="#2d8a2f" /><path d="M13.500 1.500l3.500 3.500h-2.200v3.500h-2.600V5H10z" fill="#fff" /></svg>
      </div>
      <div class="marks">
        <div v-for="m in marks" :key="m.title" class="mark" :style="{ width: m.width + 'px' }">
          <svg width="16" height="16"><use :href="'#i-' + m.icon" /></svg><span :class="{ fade: m.fade }">{{ m.title }}</span>
        </div>
        <svg class="more" width="9" height="8" viewBox="0 0 9 8"><path d="M1 .5L4 4 1 7.500M5 .5L8 4 5 7.500" fill="none" stroke="#111" stroke-width="1.700" /></svg>
        <svg width="16" height="16"><use href="#i-folder" /></svg><span class="other">Other Bookmarks</span>
      </div>

      <div class="page">
        <nav class="nav">
          <span class="brand">RC Ebill - PCVT</span>
          <a v-for="l in navLinks" :key="l">{{ l }}</a>
          <div class="user">
            <svg width="13" height="13" viewBox="0 0 13 13"><path d="M6.500 0C9 0 9.800 1.700 9.500 4c-.1 1.300-1 2.400-1.200 3 .2 1.500 4.200 1.600 4.200 4V12.500H.5V11c0-2.400 4-2.500 4.200-4C4.500 6.400 3.600 5.300 3.500 4 3.200 1.700 4 0 6.500 0z" fill="#333" /></svg>
            <span>4esrter4lyf</span><i />
          </div>
        </nav>
        <main>
          <h1>My Account</h1>
          <div class="cols">
            <div class="left">
              <div class="navtabs"><span class="on">Current Usage</span><a>Plan &amp; Features</a></div>
              <h3>Shared Plan Summary</h3>
              <dl class="plan">
                <dt>National Family 2100 Plan (Shared)</dt>
                <dd v-for="u in shared" :key="u.label"><span>{{ u.label }}</span><span>{{ u.value }}</span></dd>
              </dl>
              <hr>
              <div class="select"><span>660-412-1611</span><svg width="18" height="26" viewBox="0 0 18 26"><path d="M.5 0v26" stroke="#bbb" /><path d="M8.500 7.500l3 4.500h-6zM8.500 19l3-4.500h-6z" fill="#444" /></svg></div>
              <dl class="plan">
                <dt>National Family 2100 Plan</dt>
                <dd v-for="u in line" :key="u.label"><span>{{ u.label }}</span><span>{{ u.value }}</span></dd>
              </dl>
              <p><a>Usage overview</a></p>
              <p>Estimated usage as of 9/12/2012 11:50:16 AM.</p>
            </div>
            <div class="right">
              <div class="well">
                <div class="acct"><b>Account - 00037654-7</b> <a>(view other accounts)</a></div>
                <div class="row"><span>Paying bill manually</span><a>Change</a></div>
                <div class="row"><span>Amount Due</span><span>$488.24</span></div>
                <div class="btns"><button class="primary">Pay Bill</button><button>View Bill</button><button>Print Bill</button></div>
              </div>
              <h3 class="want">I Want To...</h3>
              <ul class="wants"><li v-for="w in wants" :key="w"><a>{{ w }}</a></li></ul>
            </div>
          </div>
          <footer>123 Main Street • (605) 990-7267 • Fax: Who uses a fax still? • <a>Email</a></footer>
        </main>
      </div>
    </section>

    <!-- Menu bar -->
    <header class="menubar">
      <svg class="logo" width="16" height="20" viewBox="0 0 16 20"><path d="M11.300 1c.1 1.800-1.500 3.600-3.300 3.600C7.800 2.900 9.500 1.100 11.300 1zM8.200 6c.8 0 1.900-1 3.500-1 1.300 0 2.600.7 3.400 1.800-2.900 1.700-2.400 5.700.6 6.900-.6 1.700-2.100 4.500-3.800 4.500-1.300 0-1.700-.8-3.300-.8s-2.100.8-3.300.8C2.700 18.200.3 14.400.3 10.700.3 7.200 2.500 5.200 4.800 5.200 6.400 5.200 7.400 6 8.200 6z" fill="#17366f" /></svg>
      <span v-for="m in menus" :key="m.label" :class="{ bold: m.bold }" :style="{ width: m.w + 'px' }">{{ m.label }}</span>
      <div class="status">
        <svg width="17" height="16" viewBox="0 0 17 16"><path d="M3 8a6.300 6.300 0 1 1 2 4.600" fill="none" stroke="#6f88ac" stroke-width="1.700" /><path d="M0 7h6l-3 3.500z" fill="#6f88ac" /><path d="M9.300 4.500V8.500l2.500 1.500" fill="none" stroke="#6f88ac" stroke-width="1.300" /></svg>
        <svg width="9" height="15" viewBox="0 0 9 15"><path d="M1 4l6.500 6.500L4.500 14V1l3 3.500L1 11" fill="none" stroke="#1a1f28" stroke-width="1.300" /></svg>
        <svg width="23" height="16" viewBox="0 0 23 16"><path d="M1 5Q11.500-2.500 22 5L11.500 15z" fill="none" stroke="#26364d" stroke-width="1.100" /></svg>
        <svg width="12" height="11" viewBox="0 0 12 11"><path d="M6 0l6 7H0zM0 8.500h12V11H0z" fill="#0d0d0d" /></svg>
        <svg width="8" height="12" viewBox="0 0 8 12"><path d="M0 4h2.500L7.500 0v12L2.500 8H0z" fill="#0d0d0d" /></svg>
        <span class="clock">Fri 2:37 PM</span>
        <span class="who">Jeremy Warner</span>
        <svg width="15" height="15" viewBox="0 0 15 15"><circle cx="6" cy="6" r="4.500" fill="none" stroke="#141a24" stroke-width="1.900" /><path d="M9.500 9.500l4.500 4.500" stroke="#141a24" stroke-width="2.300" /></svg>
      </div>
    </header>

    <!-- Dock -->
    <div class="dock">
      <svg class="shelf" width="1290" height="51" viewBox="0 0 1290 51">
        <defs><linearGradient id="shelfG" x2="0" y2="1"><stop offset="0" stop-color="#a9bdd4" stop-opacity=".55" /><stop offset="1" stop-color="#a3aebc" stop-opacity=".72" /></linearGradient></defs>
        <path d="M30 0H1259L1289 48H1z" fill="url(#shelfG)" />
        <path d="M1055 0h24Q1040 34 1002 48h-22Q1030 30 1055 0z" fill="#fff" fill-opacity=".4" />
        <path d="M12 20Q300 42 640 40T1272 32L1289 48H1z" fill="#4d6078" fill-opacity=".14" />
        <rect x="1" y="47.500" width="1287" height="1" fill="#5a6470" /><rect x="1" y="48.500" width="1287" height="3" fill="#e9eef3" />
      </svg>
      <div class="dock-items">
        <div v-for="d in dockLeft" :key="d.icon" class="dock-item">
          <svg class="big" width="64" height="64"><use :href="'#d-' + d.icon" /></svg>
          <svg class="mirror" width="64" height="64"><use :href="'#d-' + d.icon" /></svg>
          <i v-if="d.running" class="glow" /><b v-if="d.badge" class="badge">{{ d.badge }}</b>
        </div>
        <svg class="divider" width="33" height="50" viewBox="0 0 33 50"><path d="M12 2h9M11.500 8h10M11 14h11.500M10 21h13.500M9 29h15.500M8 38h18M7 47h20" stroke="#dfe8f2" stroke-opacity=".6" stroke-width="3.500" /></svg>
        <div v-for="d in dockRight" :key="d.icon" class="dock-item">
          <svg class="big" width="64" height="64"><use :href="'#d-' + d.icon" /></svg>
          <svg class="mirror" width="64" height="64"><use :href="'#d-' + d.icon" /></svg>
          <svg v-if="d.icon === 'minimized'" class="mini" width="22" height="22"><use href="#d-activity" /></svg>
        </div>
      </div>
    </div>
  </div>
</template>

<style>
html, body { margin: 0; overflow: hidden; background: #0a60d8; }
</style>

<style scoped>
* { box-sizing: border-box; }
.desktop { position: relative; width: 1920px; height: 1200px; overflow: hidden; font: 12px/16px "Noto Sans", "Open Sans", sans-serif; color: #111; }
.wallpaper { position: absolute; left: 0; top: 0; }
.sprite { position: absolute; }
svg { display: block; flex: none; }
.symbols { display: none; }
.window { position: absolute; overflow: hidden; display: flex; flex-direction: column; }

.menubar { position: absolute; left: 0; top: 0; width: 1920px; height: 22px; display: flex; align-items: center; padding: 0 20px 1px; background: linear-gradient(#e3f2ff 0, #b5dbff 2px, #a2c7f8 11px, #8fb4ee 14px, #8aaedf 20px, #12336b 21px); font-size: 14px; line-height: 20px; }
.menubar .logo { margin-right: 19px; }
.menubar .bold { font-weight: 700; }
.status { margin-left: auto; display: flex; align-items: center; white-space: nowrap; }
.status svg:nth-child(1) { margin-right: 16px; }
.status svg:nth-child(2) { margin-right: 15px; }
.status svg:nth-child(3) { margin-right: 12px; }
.status svg:nth-child(4) { margin-right: 15px; }
.status svg:nth-child(5) { margin-right: 22px; }
.clock { width: 94px; }
.who { width: 127px; font-weight: 700; color: #33435c; letter-spacing: -.15px; }

.svn { left: 3px; top: 22px; width: 800px; height: 603px; border-radius: 5px 5px 4px 4px; background: #fff; box-shadow: 0 8px 24px rgba(0,0,0,.5); }
.svn-bar { flex: none; height: 78px; border-bottom: 1px solid #a5a5a5; background: linear-gradient(#f9f9f9, #e3e3e3); padding: 5px 0 0 8px; }
.idle-lights { display: flex; gap: 8px; }
.idle-lights i { width: 12px; height: 12px; border-radius: 50%; border: 1px solid #a9a9a9; background: linear-gradient(#e4e4e4, #fcfcfc); }
.svn-tools { display: flex; margin: 10px 0 0 -6px; }
.tool { display: flex; flex-direction: column; align-items: center; color: #8d8d8d; font-size: 11.5px; height: 46px; width: 66px; }
.tool svg { height: 30px; }
.tool:first-child { width: 52px; }
.tool:nth-child(2) { width: 48px; }
.faded { opacity: .6; }
.svn-body { flex: 1; display: flex; min-height: 0; }
.side { width: 242px; border-right: 1px solid #a9a9a9; background: #f0f0f0; display: flex; flex-direction: column; }
.side-head { flex: none; height: 33px; border-bottom: 1px solid #c4c4c4; display: flex; align-items: center; justify-content: space-between; padding: 0 5px 0 12px; font-weight: 700; color: #989898; font-size: 11px; }
.grip { width: 4px; height: 12px; border: solid #8492a4; border-width: 0 1px; }
.repos { list-style: none; margin: 8px 0 0; padding: 0; flex: 1; font-size: 11.5px; }
.repo { height: 20px; display: flex; align-items: center; padding-left: 10px; gap: 4px; letter-spacing: -.1px; }
.repo.child { padding: 0 4px 0 36px; gap: 5px; letter-spacing: 0; }
.repo.selected { background: linear-gradient(#b4bfdb, #8f9cc2); border-top: 1px solid #9aa9cc; color: #fff; font-weight: 700; font-size: 11px; letter-spacing: -.1px; text-shadow: 0 1px 1px rgba(0,0,0,.4); }
.tri { width: 0; height: 0; border: 0 solid transparent; }
.tri.down { border-width: 8px 4.5px 0; border-top-color: #6d7783; }
.tri.right { border-width: 4.5px 0 4.5px 8px; border-left-color: #777; }
.pill { margin-left: auto; display: flex; height: 16px; border: 1px solid #9fabbd; border-radius: 8px; overflow: hidden; font: 700 10.5px/14px "Noto Sans", sans-serif; color: #7b92b3; background: #dbe6f4; text-shadow: none; }
.pill em { font-style: normal; padding: 0 4px 0 6px; }
.pill em:last-child { background: #f0ead0; color: #8d8768; }
.pill em:last-child:not(:first-child) { border-left: 1px solid #9fabbd; padding: 0 5px 0 4px; }
.selected .pill { border-color: #f0ead0; }
.selected .pill em { padding: 0 4px; }
.side-foot { flex: none; height: 29px; border-top: 1px solid #b2b2b2; background: linear-gradient(#f1f1f1, #dfdfdf); display: flex; font-size: 10.5px; font-weight: 700; color: #929292; }
.side-foot span { border-right: 1px solid #b7b7b7; padding-left: 12px; display: flex; align-items: center; height: 28px; }
.side-foot i { border: solid transparent; border-width: 5px 3.5px 0; border-top-color: #6d6d6d; margin-left: 3px; }
.new { width: 55px; }
.actions { width: 72px; }
.tree { flex: 1; display: flex; flex-direction: column; background: #fff; overflow: hidden; }
.tree-top { flex: none; height: 33px; background: #e4e4e4; border-bottom: 1px solid #c4c4c4; padding: 8px 0 0 38px; font-weight: 700; color: #989898; font-size: 11px; }
.tree-head { flex: none; height: 16px; border-bottom: 1px solid #b2b2b2; background: linear-gradient(#fff, #eee); display: flex; font-size: 11px; line-height: 14px; }
.tree-head .dots { width: 28px; border-right: 1px solid #bbb; display: flex; align-items: center; justify-content: center; gap: 1px; margin-right: 4px; }
.dots i { width: 3.5px; height: 3.5px; border-radius: 50%; background: #444; }
.tree-row { height: 20px; padding-left: 27px; }
.tree-row:nth-child(even) { background: #f3f5f8; }
.cell { display: flex; align-items: center; gap: 3px; height: 20px; border-left: 1px solid #c9c9c9; padding-left: 9px; }
.cell .in { margin-left: 13px; }

.mail { left: 617px; top: 22px; width: 1303px; height: 884px; border-radius: 6px 0 4px 4px; background: #fff; box-shadow: 0 6px 16px rgba(0,0,0,.5), 0 0 1px rgba(0,0,0,.6); }
.mail-bar { height: 55px; border-bottom: 1px solid #8f8f8f; background: linear-gradient(#f6f6f6, #d9d9d9); display: flex; justify-content: space-between; padding: 2px 8px 0 10px; }
.idle-lights.dark i { border-color: #888; }
.mail-search { margin-top: 22px; width: 330px; height: 22px; border: 1px solid #aaa; border-radius: 11px; background: #fff; box-shadow: inset 0 1px 2px #bbb; color: #8a8a8a; font-size: 13px; line-height: 20px; padding-left: 49px; letter-spacing: -.15px; }
.mail-cols { height: 21px; border-bottom: 1px solid #9aa3b5; background: linear-gradient(#dde1ea, #cdd1dc); display: flex; justify-content: flex-end; align-items: center; padding-right: 3px; gap: 6px; }
.mail-cols i { width: 1px; height: 15px; background: #9da3ae; }
.mail-sel { height: 61px; padding: 1px 1px 2px; background: #c5cfe0; border-bottom: 1px solid #8f9cb3; }
.mail-sel div { height: 57px; border: 1px solid #98a5bb; border-radius: 3px; background: linear-gradient(#e6e6e6, #d8d8d8); }
.mail-head { height: 88px; border-bottom: 1px solid #c6c6c6; background: linear-gradient(#f9fbf8, #ebebeb); }
.mail-text { margin: 0; flex: 1; padding: 35px 0 0 1021px; font: 11.63px/14px "DejaVu Sans Mono", monospace; color: #111; }
.mail-status { height: 25px; border-top: 1px solid #9a9a9a; background: linear-gradient(#f7f7f7 0, #f1f1f1 48%, #dfdfdf 52%, #f1f1f1); display: flex; align-items: center; white-space: nowrap; font-size: 12px; letter-spacing: -.05px; }
.uptodate { width: 1122px; text-align: right; padding-right: 8px; border-right: 1px solid #9a9a9a; height: 24px; line-height: 24px; margin-right: 7px; letter-spacing: .1px; }
.conn { margin-left: 7px; letter-spacing: -.35px; }

.files { position: absolute; left: 1700px; top: 911px; display: flex; }
figure { margin: 0; width: 108px; display: flex; flex-direction: column; align-items: center; }
figcaption { margin-top: 8px; white-space: pre; text-align: center; color: #fff; font-weight: 700; font-size: 12px; line-height: 15px; letter-spacing: .05px; text-shadow: 0 1px 2px #000, 0 1px 3px #000; }

.browser { left: 314px; top: 28px; width: 1327px; height: 964px; border-radius: 5px 5px 4px 4px; background: #fff; overflow: visible; box-shadow: 0 0 1px rgba(0,0,0,.8), 0 24px 50px rgba(0,0,0,.68), 0 6px 30px rgba(0,0,0,.35); }
.tabstrip { height: 36px; display: flex; border-radius: 5px 5px 0 0; background: linear-gradient(#f4f4f4 0, #e6e6e6 3px, #cdcdcd); border-bottom: 1px solid #979797; padding-left: 11px; }
.lights { display: flex; gap: 8px; padding-top: 13px; width: 64px; }
.lights i { width: 12px; height: 12px; border-radius: 50%; border: 1px solid #5f6a76; background: radial-gradient(circle at 50% 85%, #e4eef8 0, #9aabbb 55%, #71808f 100%); }
.tabs { display: flex; padding-top: 11px; }
.tab { position: relative; width: 148px; height: 25px; display: flex; align-items: center; padding-left: 14px; }
.tab-shape { position: absolute; left: 0; top: 0; }
.fav { position: relative; z-index: 1; }
.tab-title { position: relative; margin-left: 1px; width: 96px; overflow: hidden; white-space: nowrap; font-size: 12px; letter-spacing: -.3px; padding: 0 5px 0 1px; }
.fade { -webkit-mask-image: linear-gradient(90deg, #000 78%, transparent 97%); mask-image: linear-gradient(90deg, #000 78%, transparent 97%); }
.x { position: relative; margin-left: 5px; }
.newtab { margin: 16px 0 0 7px; }
.full { margin: 10px 0 0 2px; }
.toolbar { height: 36px; display: flex; align-items: center; background: linear-gradient(#f3f3f3, #e0e0e0); padding: 0 5px 1px 8px; }
.toolbar > svg:nth-child(-n+4) { margin-right: 10px; }
.omni { flex: 1; height: 25px; border: 1px solid #b3b3b3; border-radius: 2px; background: #fff; display: flex; align-items: center; padding: 0 3px 0 6px; gap: 7px; }
.url { flex: 1; color: #7a7a7a; font-size: 13.5px; letter-spacing: 0; margin-left: -1px; }
.url b { font-weight: 400; color: #000; }
.abp { margin-right: -3px; }
.menu { margin-left: 12px; }
.marks { height: 23px; display: flex; align-items: center; background: linear-gradient(#e0e0e0, #d2d2d2); border-bottom: 1px solid #6e6e6e; padding: 0 0 3px 7px; white-space: nowrap; font-size: 12px; letter-spacing: -.1px; }
.mark { display: flex; align-items: center; overflow: hidden; flex: none; }
.mark span { margin-left: 4px; max-width: 118px; overflow: hidden; }
.more { margin: 0 12px 0 55px; }
.other { margin-left: 5px; letter-spacing: -.3px; }

.page { flex: 1; font: 13px/18px "Liberation Sans", Arial, sans-serif; color: #333; }
a { color: #08c; text-decoration: none; }
.nav { height: 40px; display: flex; align-items: center; padding: 0 88px 0 79px; background: linear-gradient(#fff, #f1f1f1); border-bottom: 1px solid #d4d4d4; box-shadow: 0 1px 3px rgba(0,0,0,.15); }
.nav a { color: #939393; padding: 0 10px; }
.brand { width: 157px; font: 300 20px/20px "Inter", "Liberation Sans", sans-serif; letter-spacing: -.45px; white-space: nowrap; padding-bottom: 2px; }
.user { margin-left: auto; display: flex; align-items: center; color: #939393; }
.user span { margin: 0 6px 0 8px; }
.user i { border: 4px solid transparent; border-top-color: #aaa; border-bottom: 0; }
main { width: 1170px; margin: 0 79px; }
h1 { margin: 176px 0 0; height: 50px; border-bottom: 1px solid #eee; font-size: 30px; line-height: 36px; letter-spacing: .15px; }
.cols { display: flex; justify-content: space-between; margin-top: 18px; height: 469px; }
.left { width: 770px; }
.navtabs { display: flex; height: 34px; border-bottom: 1px solid #ddd; letter-spacing: -.1px; }
.navtabs span { height: 34px; border: 1px solid #ddd; border-bottom-color: #fff; border-radius: 4px 4px 0 0; padding: 7px 12px; color: #555; margin-right: 2px; }
.navtabs a { padding: 8px 13px; letter-spacing: -.15px; }
h3 { margin: 19px 0 0; font-size: 18px; line-height: 27px; }
h3 + .plan { margin-top: -1px; }
.plan { margin: 0; width: 600px; }
.plan dt { margin-left: 25px; letter-spacing: -.05px; }
.plan dd { margin-left: 50px; display: flex; justify-content: space-between; letter-spacing: -.04px; }
.plan dd span:last-child { letter-spacing: .08px; }
hr { margin: 18px 0 19px; border: 0; border-top: 1px solid #eee; height: 0; }
.select { width: 220px; height: 28px; border: 1px solid #bbb; border-radius: 5px; display: flex; align-items: center; justify-content: space-between; padding-left: 8px; color: #555; background: linear-gradient(#e6e6e6, #fbfbfb); box-shadow: inset 0 0 4px #ccc; margin-bottom: 9px; }
p { margin: 9px 0; letter-spacing: .06px; }
.right { width: 370px; }
.well { height: 192px; border: 1px solid #e5e5e5; border-radius: 4px; background: #f5f5f5; box-shadow: inset 0 1px 1px rgba(0,0,0,.05); padding: 18px 19px; }
.acct { height: 20px; line-height: 20px; white-space: nowrap; font-size: 14px; }
.acct a { font-size: 12px; margin-left: 1px; letter-spacing: -.05px; }
.acct b { font-size: 14px; letter-spacing: .15px; }
.row { height: 35px; border-top: 1px solid #ddd; padding: 8px; display: flex; }
.row > :first-child { width: 222px; }
.row + .row { border-bottom: 1px solid #ddd; height: 36px; }
.btns { display: flex; justify-content: center; gap: 4px; margin-top: 17px; }
button { height: 28px; border: 1px solid #c5c5c5; border-bottom-color: #b3b3b3; border-radius: 4px; padding: 0 10.5px; font: 13px/18px "Liberation Sans", Arial, sans-serif; color: #333; background: linear-gradient(#fff, #e6e6e6); box-shadow: 0 1px 2px rgba(0,0,0,.05); }
.primary { color: #fff; border-color: #04c #04c #002a80; background: linear-gradient(#08c, #04c); text-shadow: 0 -1px 0 rgba(0,0,0,.25); }
.want { margin-top: 20px; border-top: 1px solid #ddd; line-height: 27px; }
.wants { margin: 0; padding-left: 25px; letter-spacing: .04px; }
footer { text-align: center; letter-spacing: .11px; }

.dock { position: absolute; left: 317px; top: 1112px; width: 1290px; height: 88px; overflow: hidden; }
.shelf { position: absolute; left: 0; top: 37px; }
.dock-items { position: relative; display: flex; padding-left: 35px; }
.dock-item { position: relative; width: 66px; height: 88px; padding: 4px 1px 0; }
.big { filter: drop-shadow(0 3px 2px rgba(0,0,0,.35)); }
.mirror { transform: scaleY(-1); opacity: .28; margin-top: 1px; }
.glow { position: absolute; left: 28px; top: 77px; width: 10px; height: 6px; border-radius: 50%; background: #fff; box-shadow: 0 0 5px 2px #6fb0f8; }
.badge { position: absolute; left: 43px; top: 5px; width: 19px; height: 19px; border-radius: 50%; border: 2px solid #fff; background: linear-gradient(#ff4a4a, #d40000); color: #fff; font: 12px/15px "Liberation Sans", sans-serif; text-align: center; box-shadow: 0 1px 3px rgba(0,0,0,.6); }
.divider { margin-top: 37px; }
.mini { position: absolute; left: 41px; top: 45px; }
</style>
